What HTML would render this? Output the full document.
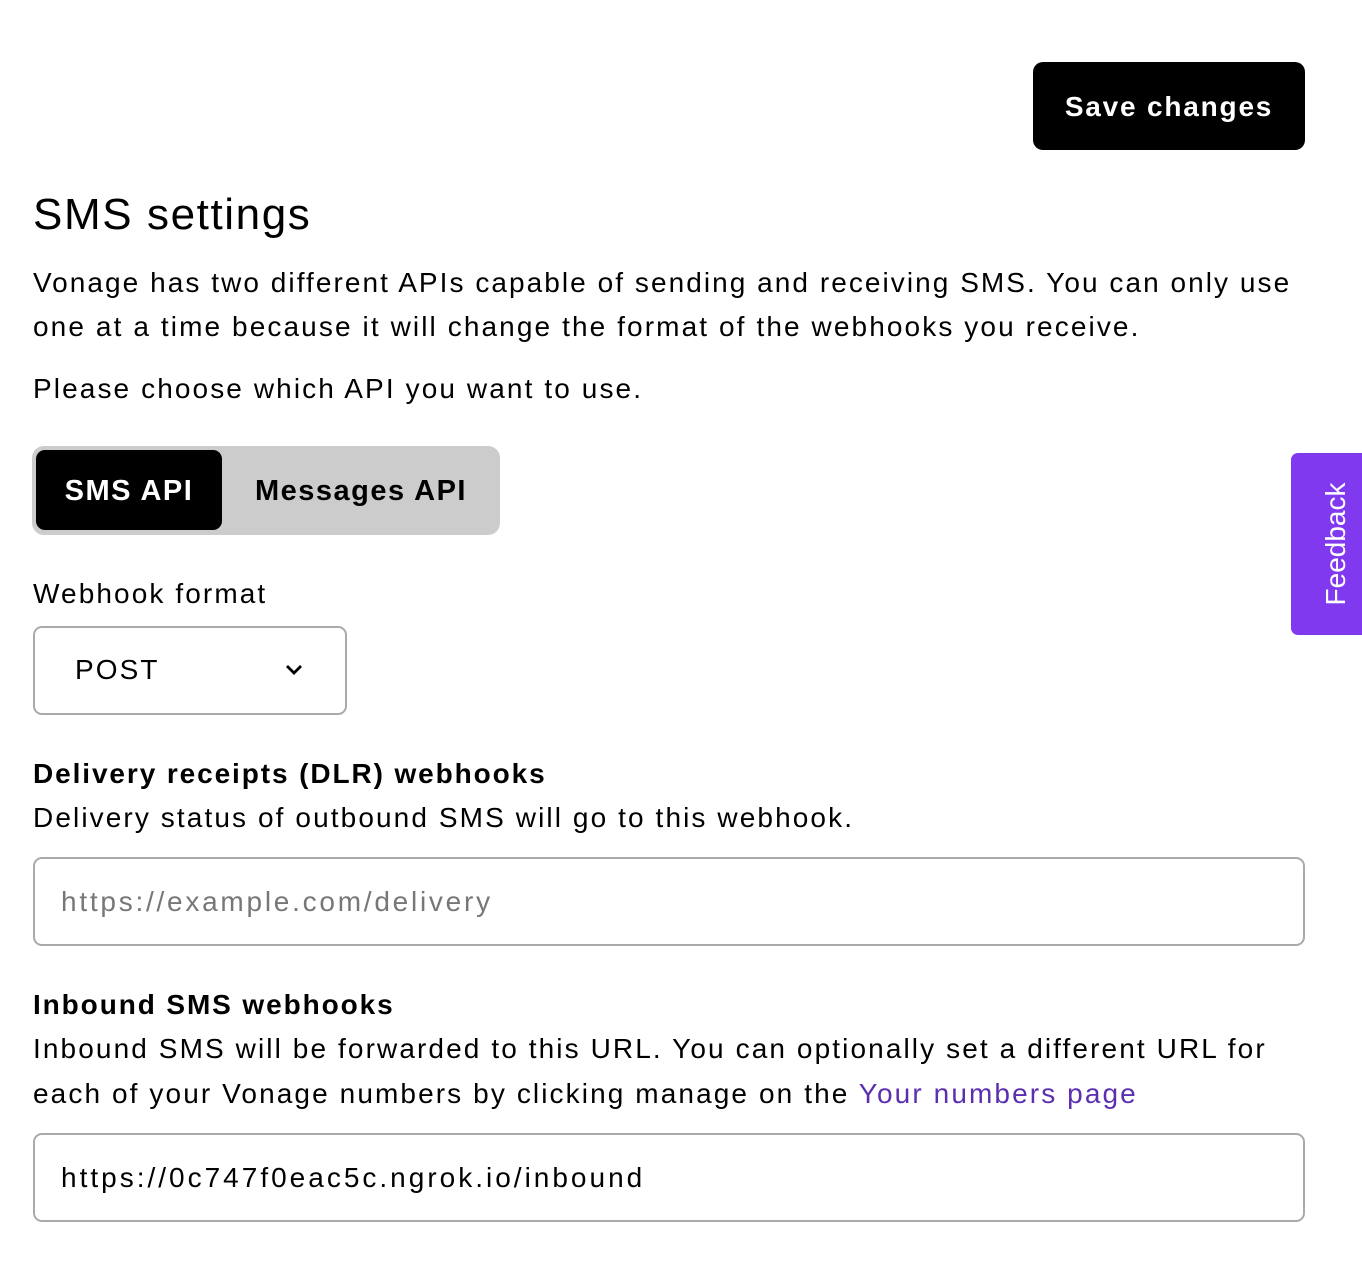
<!DOCTYPE html>
<html><head><meta charset="utf-8"><style>
*{margin:0;padding:0;box-sizing:border-box}
body{width:1362px;height:1272px;background:#fff;font-family:"Liberation Sans",sans-serif;color:#000;position:relative;overflow:hidden}
.a{position:absolute;white-space:nowrap}
.t{font-size:28px;line-height:44px;letter-spacing:2.1px}
</style></head><body>
<div class="a" style="left:1033px;top:62px;width:272px;height:88px;background:#000;border-radius:10px;color:#fff;font-weight:bold;font-size:28px;line-height:90px;text-align:center;letter-spacing:1.8px">Save changes</div>
<div class="a" style="left:33px;top:187px;font-size:44px;line-height:56px;letter-spacing:1.6px">SMS settings</div>
<div class="a t" style="left:33px;top:261px;letter-spacing:2.05px">Vonage has two different APIs capable of sending and receiving SMS. You can only use</div>
<div class="a t" style="left:33px;top:305px">one at a time because it will change the format of the webhooks you receive.</div>
<div class="a t" style="left:33px;top:367px">Please choose which API you want to use.</div>
<div class="a" style="left:32px;top:446px;width:468px;height:89px;background:#ccc;border-radius:12px"></div>
<div class="a" style="left:36px;top:450px;width:186px;height:80px;background:#000;border-radius:9px;color:#fff;font-weight:bold;font-size:29px;line-height:82px;text-align:center;letter-spacing:1.5px">SMS API</div>
<div class="a" style="left:222px;top:450px;width:278px;height:80px;font-weight:bold;font-size:29px;line-height:82px;text-align:center;letter-spacing:1.5px">Messages API</div>
<div class="a t" style="left:33px;top:572px">Webhook format</div>
<div class="a" style="left:33px;top:626px;width:314px;height:89px;border:2px solid #aaa;border-radius:9px"></div>
<div class="a t" style="left:75px;top:648px">POST</div>
<svg class="a" style="left:284px;top:663px" width="20" height="14" viewBox="0 0 20 14"><path d="M3 3l7 7 7-7" fill="none" stroke="#000" stroke-width="2.8"/></svg>
<div class="a t" style="left:33px;top:752px;font-weight:bold;letter-spacing:1.9px">Delivery receipts (DLR) webhooks</div>
<div class="a t" style="left:33px;top:796px">Delivery status of outbound SMS will go to this webhook.</div>
<div class="a" style="left:33px;top:857px;width:1272px;height:89px;border:2px solid #aaa;border-radius:9px"></div>
<div class="a t" style="left:61px;top:880px;color:#777;letter-spacing:2.75px">https://example.com/delivery</div>
<div class="a t" style="left:33px;top:983px;font-weight:bold;letter-spacing:1.9px">Inbound SMS webhooks</div>
<div class="a t" style="left:33px;top:1027px">Inbound SMS will be forwarded to this URL. You can optionally set a different URL for</div>
<div class="a t" style="left:33px;top:1072px">each of your Vonage numbers by clicking manage on the <span style="color:#5b2fb0">Your numbers page</span></div>
<div class="a" style="left:33px;top:1133px;width:1272px;height:89px;border:2px solid #aaa;border-radius:9px"></div>
<div class="a t" style="left:61px;top:1156px;letter-spacing:3px">https://0c747f0eac5c.ngrok.io/inbound</div>
<div class="a" style="left:1291px;top:453px;width:80px;height:182px;background:#8139f0;border-radius:7px"></div>
<div class="a" style="left:1336px;top:544px;transform:translate(-50%,-50%) rotate(-90deg);color:#fff;font-size:28px;line-height:30px">Feedback</div>
</body></html>
